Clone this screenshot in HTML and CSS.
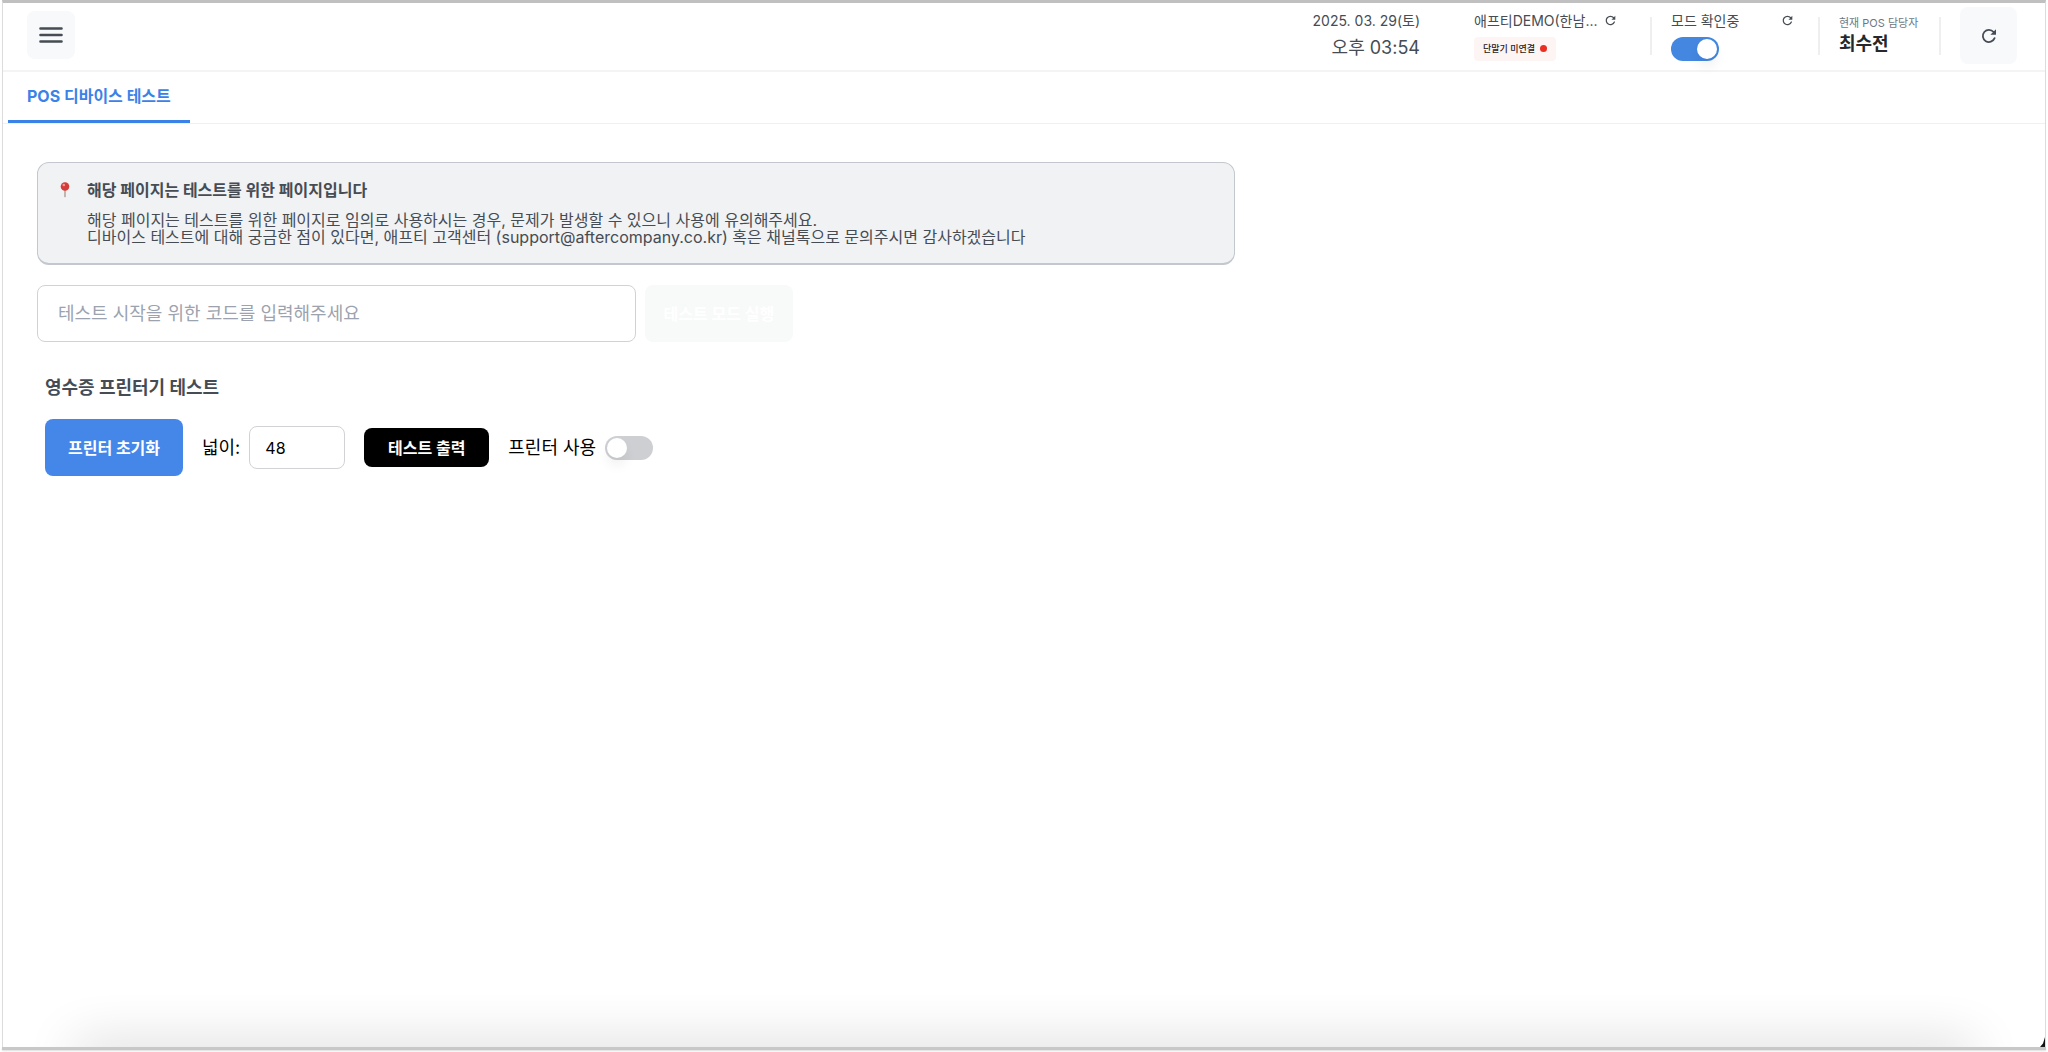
FILE: index.html
```html
<!DOCTYPE html>
<html lang="ko">
<head>
<meta charset="utf-8">
<meta name="viewport" content="width=device-width, initial-scale=1">
<title>POS 디바이스 테스트</title>
<link rel="stylesheet" href="styles.css">
</head>
<body>
<svg class="sprite" aria-hidden="true">
  <symbol id="reload" viewBox="0 0 16 16">
    <path d="M13.6 10.2A6.1 6.1 0 1 1 12.6 4" fill="none" stroke="currentColor" stroke-width="1.8" stroke-linecap="round"/>
    <path d="M15 1.2v5.600H9.400z" fill="currentColor"/>
  </symbol>
</svg>
<div class="window">
  <header class="topbar">
    <button class="menu-button" type="button" aria-label="메뉴">
      <svg width="24" height="18" viewBox="0 0 24 18"><path d="M1.5 2.5h21M1.5 9h21M1.5 15.500h21" stroke="currentColor" stroke-width="2.6" stroke-linecap="round"/></svg>
    </button>
    <div class="status">
      <div class="clock">
        <span class="small-text">2025. 03. 29(토)</span>
        <span class="time">오후 03:54</span>
      </div>
      <div class="store">
        <div class="line">
          <span class="small-text">애프티DEMO(한남...</span>
          <button class="icon-button" type="button" aria-label="매장 새로고침"><svg><use href="#reload"/></svg></button>
        </div>
        <span class="badge">단말기 미연결<i class="dot"></i></span>
      </div>
      <div class="mode">
        <div class="line">
          <label class="small-text" for="mode">모드 확인중</label>
          <button class="icon-button" type="button" aria-label="모드 새로고침"><svg><use href="#reload"/></svg></button>
        </div>
        <input class="switch" id="mode" type="checkbox" checked>
      </div>
      <div class="staff">
        <span class="staff-label">현재 POS 담당자</span>
        <strong class="staff-name">최수전</strong>
      </div>
      <button class="refresh-button" type="button" aria-label="새로고침"><svg><use href="#reload"/></svg></button>
    </div>
  </header>
  <nav class="tabs"><a class="tab" href="#device-test" aria-current="page">POS 디바이스 테스트</a></nav>
  <main class="content" id="device-test">
    <section class="notice">
      <svg class="pin" width="16" height="16" viewBox="0 0 16 16" aria-hidden="true">
        <path d="M7.400 7h1.200v7.500l-.6 1-.6-1z" fill="#a58b80"/>
        <circle cx="8" cy="4.500" r="4.300" fill="#d53b38"/>
        <circle cx="6.800" cy="3" r="1.300" fill="#f29a96"/>
      </svg>
      <div class="notice-body">
        <h2 class="notice-title">해당 페이지는 테스트를 위한 페이지입니다</h2>
        <p class="notice-text">해당 페이지는 테스트를 위한 페이지로 임의로 사용하시는 경우, 문제가 발생할 수 있으니 사용에 유의해주세요.<br>디바이스 테스트에 대해 궁금한 점이 있다면, 애프티 고객센터 (support@aftercompany.co.kr) 혹은 채널톡으로 문의주시면 감사하겠습니다</p>
      </div>
    </section>
    <form class="code-form">
      <input class="field code-field" type="text" aria-label="테스트 코드" placeholder="테스트 시작을 위한 코드를 입력해주세요">
      <button class="button muted" type="button" disabled>테스트 모드 실행</button>
    </form>
    <section class="printer">
      <h2 class="section-title">영수증 프린터기 테스트</h2>
      <div class="controls">
        <button class="button primary" type="button">프린터 초기화</button>
        <div class="pair">
          <label for="width">넓이:</label>
          <input class="field width-field" id="width" type="text" value="48">
        </div>
        <button class="button dark" type="button">테스트 출력</button>
        <div class="pair">
          <label for="printer">프린터 사용</label>
          <input class="switch" id="printer" type="checkbox">
        </div>
      </div>
    </section>
  </main>
</div>
</body>
</html>
```
FILE: styles.css
```css
* { box-sizing: border-box; }

body {
  margin: 0;
  padding: 0 2px 5px;
  min-height: 100vh;
  display: flex;
  background: #fff;
  color: #000;
  font: 18px/24px Inter, "Noto Sans CJK KR", sans-serif;
}

button, input { font: inherit; margin: 0; }
button { border: 0; padding: 0; color: inherit; background: none; }
h2, p { margin: 0; }
.sprite { position: absolute; width: 0; height: 0; }

.window {
  position: relative;
  flex: 1;
  overflow: hidden;
  border: 1px solid #dcdcdc;
  border-top: 3px solid #c0c0c0;
  border-bottom: 0;
}

/* Shade rising from below the lower edge */
.window::after {
  content: "";
  position: absolute;
  left: 72px;
  right: 72px;
  bottom: -20px;
  height: 20px;
  box-shadow: 0 0 52px rgba(0, 0, 0, .24);
}

/* Dark sliver in the lower right corner */
.window::before {
  content: "";
  position: absolute;
  right: 0;
  bottom: 0;
  width: 5px;
  height: 10px;
  background: #111;
  clip-path: polygon(100% 0, 100% 100%, 0 100%, 60% 65%);
}

body::after {
  content: "";
  position: absolute;
  left: 2px;
  right: 2px;
  bottom: 2px;
  height: 3px;
  background: #c8c8c8;
  box-shadow: 0 1px 2px #ddd;
}

.topbar {
  display: flex;
  justify-content: space-between;
  height: 69px;
  padding: 0 28px 0 24px;
  border-bottom: 2px solid #f4f4f4;
  color: #464c53;
}

.menu-button {
  display: grid;
  place-items: center;
  width: 48px;
  height: 48px;
  margin-top: 8px;
  border-radius: 8px;
  background: #f8f9fb;
}

.status { display: flex; align-items: center; height: 65px; }
.small-text { font-size: 14px; line-height: 20px; white-space: nowrap; }
.line { display: flex; align-items: center; justify-content: space-between; height: 20px; }

.clock { display: flex; flex-direction: column; align-items: flex-end; gap: 4px; margin-right: 54px; }
.time { font-size: 18px; line-height: 26px; }

.store, .mode, .staff {
  display: flex;
  flex-direction: column;
  align-items: flex-start;
}
.store, .mode { gap: 6px; }
.store .line { width: 144px; }
.store { width: 177px; }
.mode .line { width: 124px; }

.mode, .staff, .refresh-button { position: relative; }
.mode { width: 148px; margin-left: 20px; }
.staff { width: 101px; margin-left: 20px; padding-bottom: 2px; }
.refresh-button { margin-left: 20px; }
.mode::before, .staff::before, .refresh-button::before {
  content: "";
  position: absolute;
  left: -21px;
  top: 50%;
  width: 2px;
  height: 38px;
  margin-top: -19px;
  background: #efefef;
}

.icon-button { display: grid; place-items: center; width: 16px; height: 16px; }
.icon-button svg { width: 11px; height: 11px; }

.badge {
  display: flex;
  align-items: center;
  gap: 5px;
  height: 24px;
  padding: 0 9px;
  border-radius: 4px;
  background: #fdf4f4;
  color: #1e2124;
  font-size: 9px;
  font-weight: 500;
  white-space: nowrap;
}
.dot { width: 7px; height: 7px; border-radius: 50%; background: #eb2d22; }

.staff-label { font-size: 11px; line-height: 18px; color: #6d7882; white-space: nowrap; }
.staff-name { font-size: 18px; line-height: 24px; font-weight: 700; color: #26282c; }

.refresh-button {
  display: grid;
  place-items: center;
  width: 57px;
  height: 57px;
  border-radius: 8px;
  background: #f8f9fb;
}
.refresh-button svg { width: 16px; height: 16px; }

.switch {
  appearance: none;
  display: flex;
  align-items: center;
  flex: none;
  width: 48px;
  height: 24px;
  padding: 0 2px;
  border-radius: 12px;
  background: #cdcfd2;
}
.switch::before {
  content: "";
  width: 20px;
  height: 20px;
  border-radius: 50%;
  background: #fff;
  box-shadow: 0 8px 12px rgba(0, 0, 0, .06);
}
.switch:checked { justify-content: flex-end; background: #4387e0; }

.tabs { display: flex; height: 52px; padding-left: 5px; border-bottom: 1px solid #f0f0f0; }
.tab {
  display: flex;
  align-items: center;
  padding: 0 19px;
  border-bottom: 3px solid #3b82e8;
  color: #3b82e8;
  font-size: 16px;
  font-weight: 700;
  text-decoration: none;
}

.content { padding: 38px 12px 38px 34px; }

.notice {
  display: flex;
  gap: 14px;
  width: 60%;
  padding: 17px 18px 17px 19px;
  border: 1px solid #c2c8ce;
  border-bottom-width: 2px;
  border-radius: 12px;
  background: #f1f2f4;
  color: #464c53;
}
.pin { flex: none; margin-top: 2px; }
.notice-title { font-size: 16px; line-height: 20px; font-weight: 700; }
.notice-text { margin-top: 12px; font-size: 16px; line-height: 17px; }

.code-form { display: flex; gap: 9px; margin-top: 20px; }
.field {
  border: 1px solid #d0d2d5;
  border-radius: 8px;
  background: #fff;
  color: #000;
}
.code-field { width: 30%; height: 57px; padding: 0 20px; }
.code-field::placeholder { color: #9ca3af; opacity: 1; }

.button { border-radius: 8px; color: #fff; font-size: 16px; font-weight: 700; white-space: nowrap; }
.muted { width: 148px; height: 57px; background: #f8faf9; }
.primary { width: 138px; height: 57px; background: #4487e9; }
.dark { width: 125px; height: 39px; background: #000; }

.printer { padding: 34px 8px; }
.section-title { font-size: 18px; line-height: 24px; font-weight: 700; color: #464c53; }
.controls { display: flex; align-items: center; gap: 19px; margin-top: 19px; }
.pair { display: flex; align-items: center; gap: 9px; }
.width-field { width: 96px; height: 43px; padding: 0 15px; font-size: 16px; }
```
